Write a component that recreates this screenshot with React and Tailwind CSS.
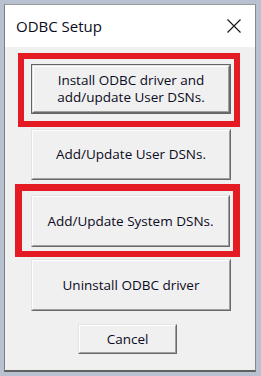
import React from 'react'

const FONT = { fontFamily: '"Open Sans", "Noto Sans", sans-serif' }

// classic raised win32 button face
function Knop({ children, w, h, isDefault = false }) {
  const face = (
    <div className="flex-1 flex border-t border-l border-t-[#e3e3e3] border-l-[#e3e3e3] border-r border-b border-r-[#696969] border-b-[#696969]">
      <div className="flex-1 flex items-center justify-center bg-[#f0f0f0] border-t border-l border-t-white border-l-white border-r border-b border-r-[#a0a0a0] border-b-[#a0a0a0] text-[13.5px] leading-[17px] text-center text-[#0b0b22]">
        {children}
      </div>
    </div>
  )
  return (
    <div className={`${w} ${h} flex shrink-0`}>
      {isDefault ? (
        <div className="flex-1 flex border border-[#646464]">{face}</div>
      ) : face}
    </div>
  )
}

export default function App() {
  return (
    <div className="w-[261px] h-[376px] bg-[#b7c1d0] pt-1 pl-1" style={FONT}>
      <div className="w-[252px] h-[368px] flex flex-col border-t border-l border-r border-b-2 border-t-[#9a9a9a] border-l-[#7d7d7d] border-r-[#8a8a8a] border-b-[#5f5f5f]">
        {/* titel */}
        <div className="h-[42px] bg-white flex items-center justify-between pl-[11px] pr-[14px]">
          <span className="text-[15px] text-[#0b0b1a] leading-none">ODBC Setup</span>
          <svg width="14" height="14" viewBox="0 0 14 14" className="text-[#1a1a1a]">
            <path d="M0.5 0.5 L13.5 13.5 M13.5 0.5 L0.5 13.5" stroke="currentColor" strokeWidth="1.2" fill="none" />
          </svg>
        </div>

        {/* isi */}
        <div className="flex-1 bg-[#f0f0f0] flex flex-col">
          <div className="ml-[13px] mt-[6px] w-[222px] h-[74px] border-[6px] border-[#e51b23] pl-[7px] pt-[5px]">
            <Knop w="w-[200px]" h="h-[50px]" isDefault>
              Install ODBC driver and<br />add/update User DSNs.
            </Knop>
          </div>

          <div className="ml-[26px] mt-[2px]">
            <Knop w="w-[200px]" h="h-[51px]">Add/Update User DSNs.</Knop>
          </div>

          <div className="ml-[10px] mt-[4px] w-[225px] h-[73px] border-[7px] border-b-[6px] border-[#e51b23] pl-[9px] pt-[4px]">
            <Knop w="w-[199px]" h="h-[52px]">Add/Update System DSNs.</Knop>
          </div>

          <div className="ml-[26px] mt-[2px]">
            <Knop w="w-[200px]" h="h-[52px]">Uninstall ODBC driver</Knop>
          </div>

          <div className="ml-[73px] mt-[13px]">
            <Knop w="w-[99px]" h="h-[30px]">Cancel</Knop>
          </div>
        </div>
      </div>
    </div>
  )
}
